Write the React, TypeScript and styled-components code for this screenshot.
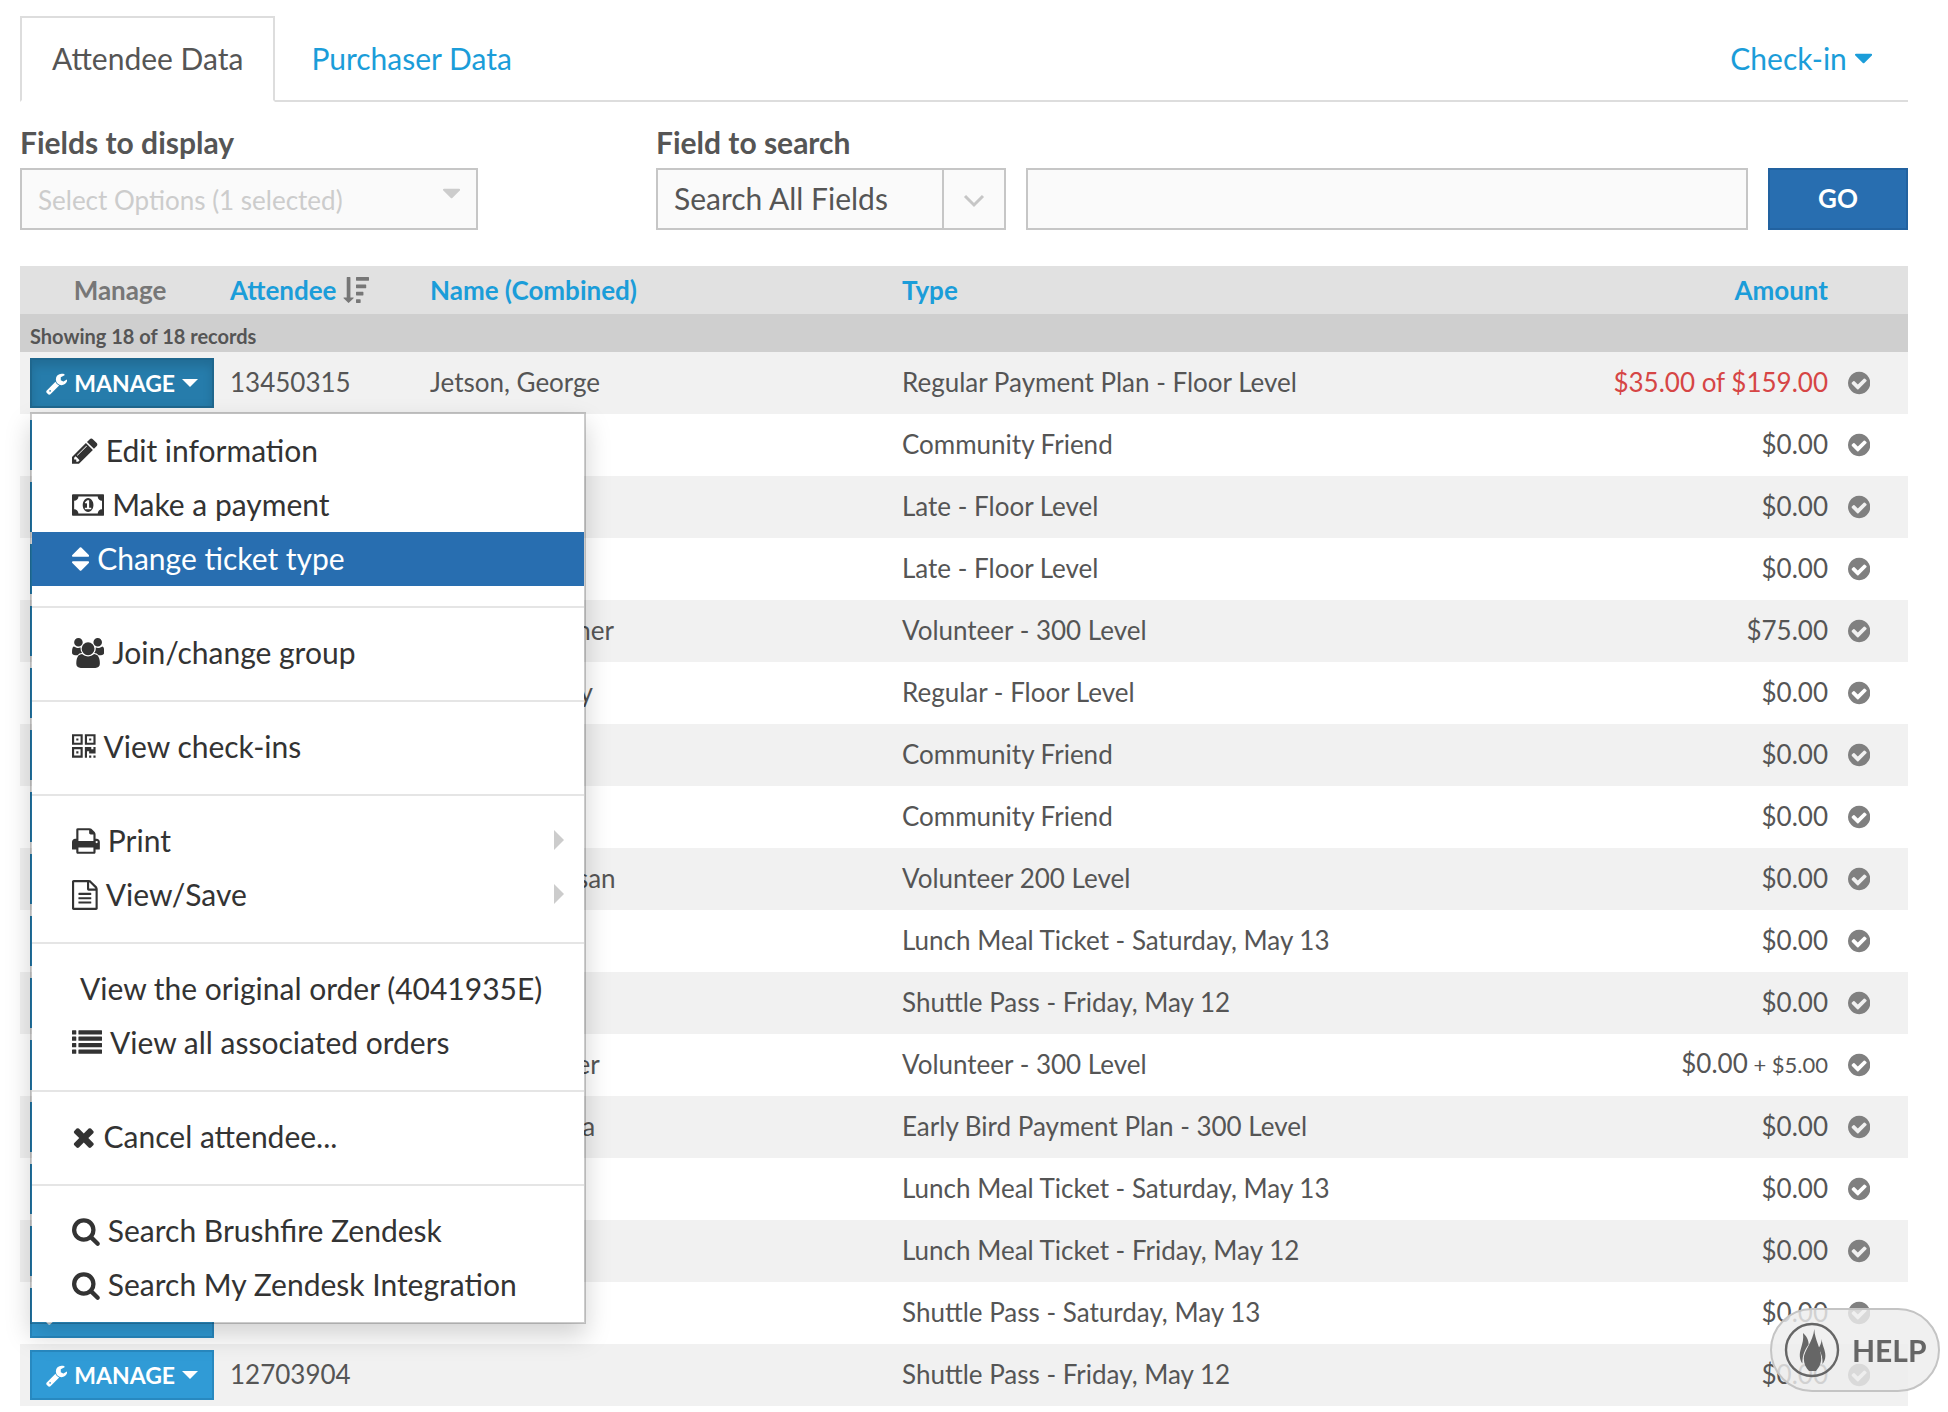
import React, { useState } from "react";
import styled, { createGlobalStyle } from "styled-components";

const GlobalStyle = createGlobalStyle`
  *, *::before, *::after { box-sizing: border-box; }
  body {
    margin: 0;
    background: #fff;
    color: #555;
    font-family: Lato, "Liberation Sans", sans-serif;
    font-size: 26px;
    line-height: 36px;
  }
  button, input, select { font: inherit; color: inherit; }
  a { color: #1b9dd9; text-decoration: none; }
`;

/* ---------- icons ---------- */

type Glyph = { x: number; w: number; d: string };

const square = (x: number, y: number, w: number, h: number) => `M${x} ${y}h${w}v${h}h${-w}z`;
const finder = (x: number, y: number) =>
  `M${x} ${y}h640v640h-640zM${x + 128} ${y + 128}v384h384v-384z` + square(x + 256, y + 256, 128, 128);
const bar = (x: number, y: number, w: number) =>
  `M${x + 32} ${y}h${w - 64}q32 0 32 32v192q0 32-32 32h${64 - w}q-32 0-32-32v-192q0-32 32-32z`;

const glyphs: Record<string, Glyph> = {
  wrench: {
    x: 64,
    w: 1664,
    d: "M448 1472q0-26-19-45t-45-19-45 19-19 45 19 45 45 19 45-19 19-45zm644-420l-682 682q-37 37-90 37-52 0-91-37l-106-108q-38-36-38-90 0-53 38-91l681-681q39 98 114.5 173.5t173.5 114.5zm634-435q0 39-23 106-47 134-164.5 217.5t-258.5 83.5q-185 0-316.5-131.5t-131.5-316.5 131.5-316.5 316.5-131.5q58 0 121.5 16.5t107.5 46.5q16 11 16 28t-16 28l-293 169v224l193 107q5-3 79-48.5t135.5-81 70.5-35.5q15 0 23.5 10t8.5 25z",
  },
  caret: {
    x: 384,
    w: 1024,
    d: "M1408 704q0 26-19 45l-448 448q-19 19-45 19t-45-19l-448-448q-19-19-19-45t19-45 45-19h896q26 0 45 19t19 45z",
  },
  pencil: {
    x: 128,
    w: 1536,
    d: "M491 1536l91-91-235-235-91 91v107h128v128h107zm523-928q0-22-22-22-10 0-17 7l-542 542q-7 7-7 17 0 22 22 22 10 0 17-7l542-542q7-7 7-17zm-54-192l416 416-832 832h-416v-416zm683 96q0 53-37 90l-166 166-416-416 166-165q36-38 90-38 53 0 91 38l235 234q37 39 37 91z",
  },
  money: {
    x: 0,
    w: 1920,
    d: "M768 1152h384v-96h-128v-448h-114l-148 137 77 80q42-37 55-57h2v288h-128v96zm512-256q0 70-21 142t-59.5 134-101.5 101-138 39-138-39-101.5-101-59.5-134-21-142 21-142 59.5-134 101.5-101 138-39 138 39 101.5 101 59.5 134 21 142zm512 256v-512q-106 0-181-75t-75-181h-1152q0 106-75 181t-181 75v512q106 0 181 75t75 181h1152q0-106 75-181t181-75zm128-832v1152q0 26-19 45t-45 19h-1792q-26 0-45-19t-19-45v-1152q0-26 19-45t45-19h1792q26 0 45 19t19 45z",
  },
  sort: {
    x: 384,
    w: 1024,
    d: "M1408 1088q0 26-19 45l-448 448q-19 19-45 19t-45-19l-448-448q-19-19-19-45t19-45 45-19h896q26 0 45 19t19 45zm0-384q0 26-19 45t-45 19h-896q-26 0-45-19t-19-45 19-45l448-448q19-19 45-19t45 19l448 448q19 19 19 45z",
  },
  users: {
    x: 64,
    w: 1920,
    d: "M657 896q-162 5-265 128h-134q-82 0-138-40.5t-56-118.5q0-353 124-353 6 0 43.5 21t97.5 42.5 119 21.5q67 0 133-23-5 37-5 66 0 159 93 256zm1071 637q0 120-73 189.5t-194 69.5h-874q-121 0-194-69.5t-73-189.5q0-53 3.5-103.5t14-109 26.5-108.5 43-97.5 62-81 85.5-53.5 111.5-20q10 0 43 21.5t73 48 107 48 135 21.5 135-21.5 107-48 73-48 43-21.5q61 0 111.5 20t85.5 53.5 62 81 43 97.5 26.5 108.5 14 109 3.5 103.5zm-1024-1277q0 106-75 181t-181 75-181-75-75-181 75-181 181-75 181 75 75 181zm704 384q0 159-112.5 271.5t-271.5 112.5-271.5-112.5-112.5-271.5 112.5-271.5 271.5-112.5 271.5 112.5 112.5 271.5zm576 225q0 78-56 118.5t-138 40.5h-134q-103-123-265-128 93-97 93-256 0-29-5-66 66 23 133 23 59 0 119-21.5t97.5-42.5 43.5-21q124 0 124 353zm-128-609q0 106-75 181t-181 75-181-75-75-181 75-181 181-75 181 75 75 181z",
  },
  qrcode: {
    x: 192,
    w: 1408,
    d:
      finder(192, 128) +
      finder(960, 128) +
      finder(192, 896) +
      "M1600 896v384h-384v-128h-128v384h-128v-640h384v128h128v-128z" +
      square(1216, 1408, 128, 128) +
      square(1472, 1408, 128, 128),
  },
  print: {
    x: 64,
    w: 1664,
    d: "M448 1536h896v-256h-896v256zm0-640h896v-384h-160q-40 0-68-28t-28-68v-160h-640v640zm1152 64q0-26-19-45t-45-19-45 19-19 45 19 45 45 19 45-19 19-45zm128 0v416q0 13-9.5 22.5t-22.5 9.5h-224v160q0 40-28 68t-68 28h-960q-40 0-68-28t-28-68v-160h-224q-13 0-22.5-9.5t-9.5-22.5v-416q0-79 56.5-135.5t135.5-56.5h64v-544q0-40 28-68t68-28h672q40 0 88 20t76 48l152 152q28 28 48 76t20 88v256h64q79 0 135.5 56.5t56.5 135.5z",
  },
  file: {
    x: 128,
    w: 1536,
    d: "M1596 380q28 28 48 76t20 88v1152q0 40-28 68t-68 28h-1344q-40 0-68-28t-28-68v-1600q0-40 28-68t68-28h896q40 0 88 20t76 48zm-444-244v376h376q-10-29-22-41l-313-313q-12-12-41-22zm384 1528v-1024h-416q-40 0-68-28t-28-68v-416h-768v1536h1280zm-1024-864q0-14 9-23t23-9h704q14 0 23 9t9 23v64q0 14-9 23t-23 9h-704q-14 0-23-9t-9-23v-64zm736 224q14 0 23 9t9 23v64q0 14-9 23t-23 9h-704q-14 0-23-9t-9-23v-64q0-14 9-23t23-9h704zm0 256q14 0 23 9t9 23v64q0 14-9 23t-23 9h-704q-14 0-23-9t-9-23v-64q0-14 9-23t23-9h704z",
  },
  list: {
    x: 0,
    w: 1792,
    d: [128, 512, 896, 1280].map((y) => bar(0, y, 256) + bar(384, y, 1408)).join(""),
  },
  times: {
    x: 192,
    w: 1408,
    d: "M1490 1322q0 40-28 68l-136 136q-28 28-68 28t-68-28l-294-294-294 294q-28 28-68 28t-68-28l-136-136q-28-28-28-68t28-68l294-294-294-294q-28-28-28-68t28-68l136-136q28-28 68-28t68 28l294 294 294-294q28-28 68-28t68 28l136 136q28 28 28 68t-28 68l-294 294 294 294q28 28 28 68z",
  },
  search: {
    x: 64,
    w: 1664,
    d: "M1216 832q0-185-131.5-316.5t-316.5-131.5-316.5 131.5-131.5 316.5 131.5 316.5 316.5 131.5 316.5-131.5 131.5-316.5zm512 832q0 52-38 90t-90 38q-54 0-90-38l-343-342q-179 124-399 124-143 0-273.5-55.5t-225-150-150-225-55.5-273.5 55.5-273.5 150-225 225-150 273.5-55.5 273.5 55.5 225 150 150 225 55.5 273.5q0 220-124 399l343 343q37 37 37 90z",
  },
  check: {
    x: 128,
    w: 1536,
    d: "M1412 734q0-28-18-46l-91-90q-19-19-45-19t-45 19l-408 407-226-226q-19-19-45-19t-45 19l-91 90q-18 18-18 46 0 27 18 45l362 362q19 19 45 19 27 0 46-19l543-543q18-18 18-45zm252 162q0 209-103 385.5t-279.5 279.5-385.5 103-385.5-103-279.5-279.5-103-385.5 103-385.5 279.5-279.5 385.5-103 385.5 103 279.5 279.5 103 385.5z",
  },
  sortDesc: {
    x: 0,
    w: 1792,
    d:
      "M736 1440q0 12-10 24l-319 319q-10 9-23 9-12 0-23-9l-320-320q-15-16-7-35 8-20 30-20h192v-1376q0-14 9-23t23-9h192q14 0 23 9t9 23v1376h192q14 0 23 9t9 23z" +
      bar(896, 0, 896) +
      bar(896, 512, 704) +
      bar(896, 1024, 512) +
      bar(896, 1536, 320),
  },
};

const IconSvg = styled.svg<{ $size: number }>`
  display: block;
  flex: none;
  height: ${(p) => p.$size}px;
  fill: currentColor;
`;

function Icon({ name, size }: { name: string; size: number }) {
  const g = glyphs[name];
  return (
    <IconSvg $size={size} viewBox={`${g.x} 0 ${g.w} 1792`} aria-hidden="true">
      <path fillRule="evenodd" d={g.d} />
    </IconSvg>
  );
}

/* ---------- tabs ---------- */

const Page = styled.main`
  padding: 16px 40px 6px 20px;
`;

const Tabs = styled.nav`
  display: flex;
  border-bottom: 2px solid #ddd;
  font-size: 30px;
`;

const Tab = styled.a<{ $active?: boolean }>`
  height: 86px;
  margin-bottom: -2px;
  padding: 20px 30px;
  line-height: 40px;
  border: 2px solid;
  border-color: ${(p) => (p.$active ? "#ddd #ddd #fff" : "transparent")};
  background: ${(p) => (p.$active ? "#fff" : "transparent")};
  color: ${(p) => (p.$active ? "#555" : "#1b9dd9")};

  & + & { margin-left: 4px; }
`;

const CheckIn = styled.button`
  display: flex;
  align-items: center;
  gap: 8px;
  margin-left: auto;
  padding: 0 36px;
  border: 0;
  background: none;
  color: #1b9dd9;
`;

/* ---------- filters ---------- */

const Filters = styled.form`
  display: flex;
  align-items: flex-end;
  gap: 20px;
  margin: 20px 0 36px;
`;

const Field = styled.div<{ $width: number; $after?: number }>`
  flex: none;
  width: ${(p) => p.$width}px;
  margin-right: ${(p) => p.$after || 0}px;
`;

const Label = styled.label`
  display: block;
  margin-bottom: 6px;
  line-height: 40px;
  font-size: 30px;
  font-weight: 700;
`;

const Picker = styled.button`
  display: flex;
  justify-content: space-between;
  width: 100%;
  height: 62px;
  padding: 2px 16px 0;
  border: 2px solid #c6c6c6;
  background: #fafafa;
  color: #ccc;
  text-align: left;
  line-height: 56px;
`;

const PickerCaret = styled.span`
  padding-top: 6px;
`;

const SelectBox = styled.div`
  display: flex;
  position: relative;
  height: 62px;
  border: 2px solid #c6c6c6;
  background: #fafafa;
`;

const Select = styled.select`
  flex: 1;
  appearance: none;
  padding: 0 80px 2px 16px;
  border: 0;
  background: none;
  font-size: 30px;
`;

const SelectArrow = styled.span`
  position: absolute;
  top: 0;
  right: 0;
  bottom: 0;
  display: flex;
  align-items: center;
  justify-content: center;
  width: 62px;
  padding-top: 4px;
  border-left: 2px solid #c6c6c6;
  pointer-events: none;
`;

const SearchInput = styled.input`
  flex: 1;
  min-width: 0;
  height: 62px;
  padding: 0 16px;
  border: 2px solid #c6c6c6;
  border-radius: 0;
  background: #fafafa;
`;

const GoButton = styled.button`
  width: 140px;
  height: 62px;
  padding: 0 0 2px;
  border: 2px solid #2262a0;
  background: #286eb0;
  color: #fff;
  font-weight: 700;
`;

/* ---------- table ---------- */

const Table = styled.table`
  width: 100%;
  table-layout: fixed;
  border-collapse: collapse;
`;

const HeadCell = styled.th<{ $width?: string; $align?: string }>`
  width: ${(p) => p.$width || "auto"};
  height: 48px;
  padding: 0 10px;
  background: #e1e1e1;
  color: #777;
  text-align: ${(p) => p.$align || "left"};
  font-weight: 700;
  white-space: nowrap;
`;

const SortLink = styled.a`
  display: flex;
  align-items: center;
  gap: 6px;
`;

const SortMark = styled.span`
  color: #777;
`;

const CountCell = styled.td`
  height: 38px;
  padding: 6px 10px 0;
  background: #cfcfcf;
  font-size: 20px;
  line-height: 32px;
  font-weight: 700;
`;

const Row = styled.tr`
  &:nth-child(even) { background: #f1f1f1; }
`;

const Cell = styled.td<{ $align?: string; $due?: boolean }>`
  height: 62px;
  padding: 0 10px 2px;
  text-align: ${(p) => p.$align || "left"};
  color: ${(p) => (p.$due ? "#d64545" : "inherit")};
  white-space: nowrap;
`;

const ControlCell = styled.td`
  height: 62px;
  padding: 0 10px;
`;

const Fee = styled.small`
  font-size: 22px;
`;

const Status = styled.span`
  color: #808080;
`;

const ManageWrap = styled.div`
  position: relative;
`;

const ManageButton = styled.button<{ $open?: boolean }>`
  display: flex;
  align-items: center;
  justify-content: space-between;
  width: 184px;
  height: 50px;
  padding: 0 14px;
  border: 2px solid ${(p) => (p.$open ? "#1f678e" : "#2889c0")};
  background: ${(p) => (p.$open ? "#267cab" : "#309bd6")};
  box-shadow: ${(p) => (p.$open ? "inset 0 6px 10px rgba(0, 0, 0, 0.125)" : "none")};
  color: #fff;
  font-size: 23px;
  font-weight: 700;
`;

const ButtonCaret = styled.span`
  border: 8px solid transparent;
  border-top-color: currentColor;
  border-bottom: 0;
`;

/* ---------- drop-down menu ---------- */

const Menu = styled.ul`
  position: absolute;
  z-index: 10;
  top: 54px;
  left: 0;
  min-width: 556px;
  margin: 0;
  padding: 10px 0;
  border: 2px solid rgba(0, 0, 0, 0.2);
  background: #fff;
  background-clip: padding-box;
  box-shadow: 0 12px 24px rgba(0, 0, 0, 0.175);
  list-style: none;
  font-size: 30px;
  white-space: nowrap;
`;

const MenuDivider = styled.li`
  height: 2px;
  margin: 20px 0 18px;
  background: #e5e5e5;
`;

const MenuLink = styled.a<{ $active?: boolean }>`
  display: flex;
  align-items: center;
  gap: 8px;
  height: 54px;
  padding: 0 20px 0 40px;
  background: ${(p) => (p.$active ? "#286eb0" : "transparent")};
  color: ${(p) => (p.$active ? "#fff" : "#333")};
`;

const MenuText = styled.span`
  padding-bottom: 2px;
`;

const EmptyIcon = styled.span`
  width: 0;
`;

const SubmenuArrow = styled.span`
  margin: 0 0 2px auto;
  border: 10px solid transparent;
  border-left-color: #ccc;
  border-right: 0;
`;

/* ---------- help ---------- */

const HelpButton = styled.button`
  position: fixed;
  right: 8px;
  bottom: 20px;
  z-index: 20;
  display: flex;
  align-items: center;
  gap: 12px;
  width: 170px;
  height: 84px;
  padding: 0 0 0 12px;
  border: 2px solid #c4c4c4;
  border-radius: 42px;
  background: rgba(237, 237, 237, 0.82);
  color: #666;
  font-size: 30px;
  font-weight: 700;
`;

/* ---------- data ---------- */

type Item = { icon?: string; text: string; sub?: boolean; active?: boolean };

const menuGroups: Item[][] = [
  [
    { icon: "pencil", text: "Edit information" },
    { icon: "money", text: "Make a payment" },
    { icon: "sort", text: "Change ticket type", active: true },
  ],
  [{ icon: "users", text: "Join/change group" }],
  [{ icon: "qrcode", text: "View check-ins" }],
  [
    { icon: "print", text: "Print", sub: true },
    { icon: "file", text: "View/Save", sub: true },
  ],
  [
    { text: "View the original order (4041935E)" },
    { icon: "list", text: "View all associated orders" },
  ],
  [{ icon: "times", text: "Cancel attendee..." }],
  [
    { icon: "search", text: "Search Brushfire Zendesk" },
    { icon: "search", text: "Search My Zendesk Integration" },
  ],
];

type Attendee = { id?: string; name?: string; type: string; amount: string; fee?: string; due?: boolean };

const attendees: Attendee[] = [
  { id: "13450315", name: "Jetson, George", type: "Regular Payment Plan - Floor Level", amount: "$35.00 of $159.00", due: true },
  { type: "Community Friend", amount: "$0.00" },
  { type: "Late - Floor Level", amount: "$0.00" },
  { type: "Late - Floor Level", amount: "$0.00" },
  { name: "Jensen, Gardner", type: "Volunteer - 300 Level", amount: "$75.00" },
  { name: "Allen, Gregory", type: "Regular - Floor Level", amount: "$0.00" },
  { type: "Community Friend", amount: "$0.00" },
  { type: "Community Friend", amount: "$0.00" },
  { name: "Robinson, Susan", type: "Volunteer 200 Level", amount: "$0.00" },
  { type: "Lunch Meal Ticket - Saturday, May 13", amount: "$0.00" },
  { type: "Shuttle Pass - Friday, May 12", amount: "$0.00" },
  { name: "Bell, Alexander", type: "Volunteer - 300 Level", amount: "$0.00", fee: "+ $5.00" },
  { name: "Jones, Victoria", type: "Early Bird Payment Plan - 300 Level", amount: "$0.00" },
  { type: "Lunch Meal Ticket - Saturday, May 13", amount: "$0.00" },
  { type: "Lunch Meal Ticket - Friday, May 12", amount: "$0.00" },
  { type: "Shuttle Pass - Saturday, May 13", amount: "$0.00" },
  { id: "12703904", type: "Shuttle Pass - Friday, May 12", amount: "$0.00" },
];

function ManageMenu() {
  return (
    <Menu>
      {menuGroups.map((group, g) => (
        <React.Fragment key={g}>
          {g > 0 && <MenuDivider role="separator" />}
          {group.map((item) => (
            <li key={item.text}>
              <MenuLink href="#" $active={item.active}>
                {item.icon ? <Icon name={item.icon} size={30} /> : <EmptyIcon />}
                <MenuText>{item.text}</MenuText>
                {item.sub && <SubmenuArrow />}
              </MenuLink>
            </li>
          ))}
        </React.Fragment>
      ))}
    </Menu>
  );
}

function FlameLogo() {
  return (
    <svg width="56" height="56" viewBox="0 0 56 56" aria-hidden="true">
      <circle cx="28" cy="28" r="26" fill="none" stroke="#666" strokeWidth="2.4" />
      <g fill="#666">
        <path d="M30.3 7C30.6 18 37.2 26 37.2 36.500C37.200 42 34.500 46 32 49H25C22 46 19.800 42 19.800 36.500C19.800 29 29 20 30.300 7Z" />
        <path d="M19 11C22.500 14 24.800 18 24.600 22.500C21.500 27 18.200 32 18.400 41.500C15.400 37.500 15.200 32 16.800 27C18.600 21 19.800 17 19 11Z" />
        <path d="M37.800 17C37.800 23 41.600 28 41.400 34C41.300 37.500 40 40 38.400 42C39 37 37.800 31.500 34.400 26.500C36 24 37.500 21 37.800 17Z" />
      </g>
    </svg>
  );
}

export default function App() {
  const [query, setQuery] = useState("");
  const [open, setOpen] = useState(0);

  return (
    <>
      <GlobalStyle />
      <Page>
        <Tabs>
          <Tab href="#" $active>Attendee Data</Tab>
          <Tab href="#">Purchaser Data</Tab>
          <CheckIn type="button">
            Check-in
            <Icon name="caret" size={30} />
          </CheckIn>
        </Tabs>

        <Filters onSubmit={(e) => e.preventDefault()}>
          <Field $width={458} $after={158}>
            <Label htmlFor="display">Fields to display</Label>
            <Picker id="display" type="button">
              Select Options (1 selected)
              <PickerCaret>
                <Icon name="caret" size={30} />
              </PickerCaret>
            </Picker>
          </Field>
          <Field $width={350}>
            <Label htmlFor="field">Field to search</Label>
            <SelectBox>
              <Select id="field">
                <option>Search All Fields</option>
              </Select>
              <SelectArrow>
                <svg width="22" height="14" viewBox="0 0 22 14" aria-hidden="true">
                  <path d="M2 2l9 9 9-9" fill="none" stroke="#c6c6c6" strokeWidth="3" />
                </svg>
              </SelectArrow>
            </SelectBox>
          </Field>
          <SearchInput
            type="text"
            aria-label="Search text"
            value={query}
            onChange={(e) => setQuery(e.target.value)}
          />
          <GoButton type="submit">GO</GoButton>
        </Filters>

        <Table>
          <thead>
            <tr>
              <HeadCell $width="200px" $align="center">Manage</HeadCell>
              <HeadCell $width="200px">
                <SortLink href="#">
                  Attendee
                  <SortMark>
                    <Icon name="sortDesc" size={26} />
                  </SortMark>
                </SortLink>
              </HeadCell>
              <HeadCell $width="25%"><a href="#">Name (Combined)</a></HeadCell>
              <HeadCell><a href="#">Type</a></HeadCell>
              <HeadCell $width="300px" $align="right"><a href="#">Amount</a></HeadCell>
              <HeadCell $width="70px" />
            </tr>
          </thead>
          <tbody>
            <tr>
              <CountCell colSpan={6}>Showing 18 of 18 records</CountCell>
            </tr>
            {attendees.map((a, i) => (
              <Row key={i}>
                <ControlCell>
                  <ManageWrap>
                    <ManageButton
                      type="button"
                      $open={open === i}
                      aria-expanded={open === i}
                      onClick={() => setOpen(open === i ? -1 : i)}
                    >
                      <Icon name="wrench" size={23} />
                      MANAGE
                      <ButtonCaret />
                    </ManageButton>
                    {open === i && <ManageMenu />}
                  </ManageWrap>
                </ControlCell>
                <Cell>{a.id}</Cell>
                <Cell>{a.name}</Cell>
                <Cell>{a.type}</Cell>
                <Cell $align="right" $due={a.due}>
                  {a.amount}
                  {a.fee && <Fee> {a.fee}</Fee>}
                </Cell>
                <ControlCell>
                  <Status>
                    <Icon name="check" size={26} />
                  </Status>
                </ControlCell>
              </Row>
            ))}
          </tbody>
        </Table>
      </Page>

      <HelpButton type="button">
        <FlameLogo />
        HELP
      </HelpButton>
    </>
  );
}
